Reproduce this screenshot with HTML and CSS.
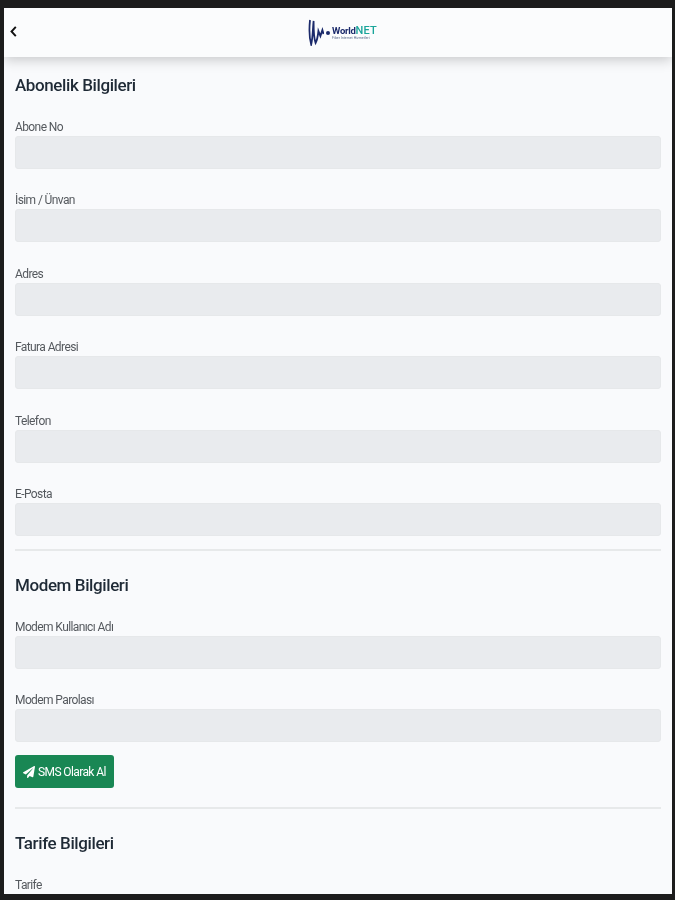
FILE: index.html
```html
<!DOCTYPE html>
<html lang="tr">
  <head>
    <meta charset="UTF-8" />
    <meta name="viewport" content="width=device-width, initial-scale=1.0" />
    <title>Abonelik Bilgileri</title>
    <link rel="stylesheet" href="styles.css">
  </head>
  <body>
    <div class="screen">
      <header class="topbar">
        <a class="back" href="#">
          <svg width="7" height="11" viewBox="0 0 7 11"><path d="M5.8 .8 L1.5 5.5 L5.8 10.2" fill="none" stroke="#111" stroke-width="1.9"/></svg>
        </a>
        <div class="logo">
          <svg width="16" height="27" viewBox="0 0 20 27" preserveAspectRatio="none">
            <path d="M2.5 1 C1.5 9 1.5 19 4 25.5 C6 19 6 9 7 2 C7 11 7 19 9.5 24 C11.5 21 12.5 16 13 12 L15.5 17 L18 11 L19.5 15" fill="none" stroke="#1b2a6b" stroke-width="2.2"/>
          </svg>
          <span class="logo-dot"></span>
          <div class="logo-text">
            <span class="logo-name">World<b>NET</b></span>
            <span class="logo-sub">Fiber Internet Hizmetleri</span>
          </div>
        </div>
      </header>

      <main class="content">
        <section class="block">
          <h2>Abonelik Bilgileri</h2>
          <div class="field"><label>Abone No</label><input type="text" disabled /></div>
          <div class="field"><label>İsim / Ünvan</label><input type="text" disabled /></div>
          <div class="field"><label>Adres</label><input type="text" disabled /></div>
          <div class="field"><label>Fatura Adresi</label><input type="text" disabled /></div>
          <div class="field"><label>Telefon</label><input type="text" disabled /></div>
          <div class="field"><label>E-Posta</label><input type="text" disabled /></div>
        </section>
        <hr />
        <section class="block">
          <h2>Modem Bilgileri</h2>
          <div class="field"><label>Modem Kullanıcı Adı</label><input type="text" disabled /></div>
          <div class="field"><label>Modem Parolası</label><input type="text" disabled /></div>
          <button class="btn-sms">
            <svg width="12" height="12" viewBox="0 0 512 512"><path fill="#fff" d="M476 3.2L12.5 270.6c-18.1 10.4-15.8 35.6 2.2 43.2L121 358.4l287.3-253.2c5.5-4.9 13.3 2.6 8.6 8.3L176 407v80.5c0 23.6 28.5 32.9 42.5 15.8L282 426l124.6 52.2c14.2 6 30.4-2.9 33-18.2l72-432C515 7.8 493.3-6.8 476 3.2z"/></svg>
            SMS Olarak Al
          </button>
        </section>
        <hr />
        <section class="block">
          <h2>Tarife Bilgileri</h2>
          <div class="field"><label>Tarife</label><input type="text" disabled /></div>
        </section>
      </main>
    </div>
  </body>
</html>
```

FILE: styles.css
```css
html,
body {
  margin: 0;
  height: 100%;
  overflow: hidden;
}

body {
  background-color: #1c1c1c;
  font-family: Roboto, "Liberation Sans", sans-serif;
  color: #1f2a36;
}

.screen {
  margin: 8px 3px 0 4px;
  height: 886px;
  overflow: hidden;
  background-color: #f9fafc;
  filter: blur(0.35px);
}

.topbar {
  position: relative;
  display: flex;
  align-items: center;
  justify-content: center;
  height: 49px;
  background-color: #fbfcfd;
  box-shadow: 0 3px 12px rgba(0, 0, 0, 0.2);
}

.back {
  position: absolute;
  left: 6px;
  top: 18px;
  line-height: 0;
}

.logo {
  display: flex;
  align-items: center;
  gap: 1px;
  margin-left: 9px;
}

.logo-dot {
  width: 4px;
  height: 4px;
  margin-left: 1px;
  border-radius: 50%;
  background-color: #1b2a6b;
}

.logo-text {
  display: flex;
  flex-direction: column;
  margin-left: 1px;
}

.logo-name {
  font-size: 9.5px;
  font-weight: 700;
  letter-spacing: -0.3px;
  line-height: 10px;
  color: #1b2a6b;
}

.logo-name b {
  font-size: 11px;
  font-weight: 500;
  letter-spacing: 0.2px;
  color: #1aa59a;
}

.logo-sub {
  font-size: 3.5px;
  line-height: 4px;
  color: #5b6b8a;
}

.content {
  padding: 0 11px;
}

h2 {
  margin: 0 0 22.5px;
  font-size: 17px;
  font-weight: 500;
  line-height: 24px;
  letter-spacing: -0.4px;
}

.block {
  padding: 22px 0 13px;
}

.block:first-child {
  padding-top: 16px;
}

.field {
  display: flex;
  flex-direction: column;
}

.field + .field {
  margin-top: 24.5px;
}

.field label {
  font-size: 12px;
  line-height: 14px;
  letter-spacing: -0.6px;
  margin-bottom: 2px;
  color: #55595e;
}

.field input {
  box-sizing: border-box;
  width: 100%;
  height: 33px;
  margin: 0;
  border: 1px solid #e6e8ea;
  border-radius: 3px;
  background-color: #e9ebee;
}

hr {
  margin: 0;
  border: none;
  border-top: 2px solid #e7e9ea;
}

.btn-sms {
  display: flex;
  align-items: center;
  gap: 3px;
  height: 33px;
  margin: 13px 0 6px;
  padding: 0 8px;
  border: none;
  border-radius: 3px;
  background-color: #198754;
  color: #fff;
  font-family: inherit;
  font-size: 12px;
  letter-spacing: -0.6px;
}
```
